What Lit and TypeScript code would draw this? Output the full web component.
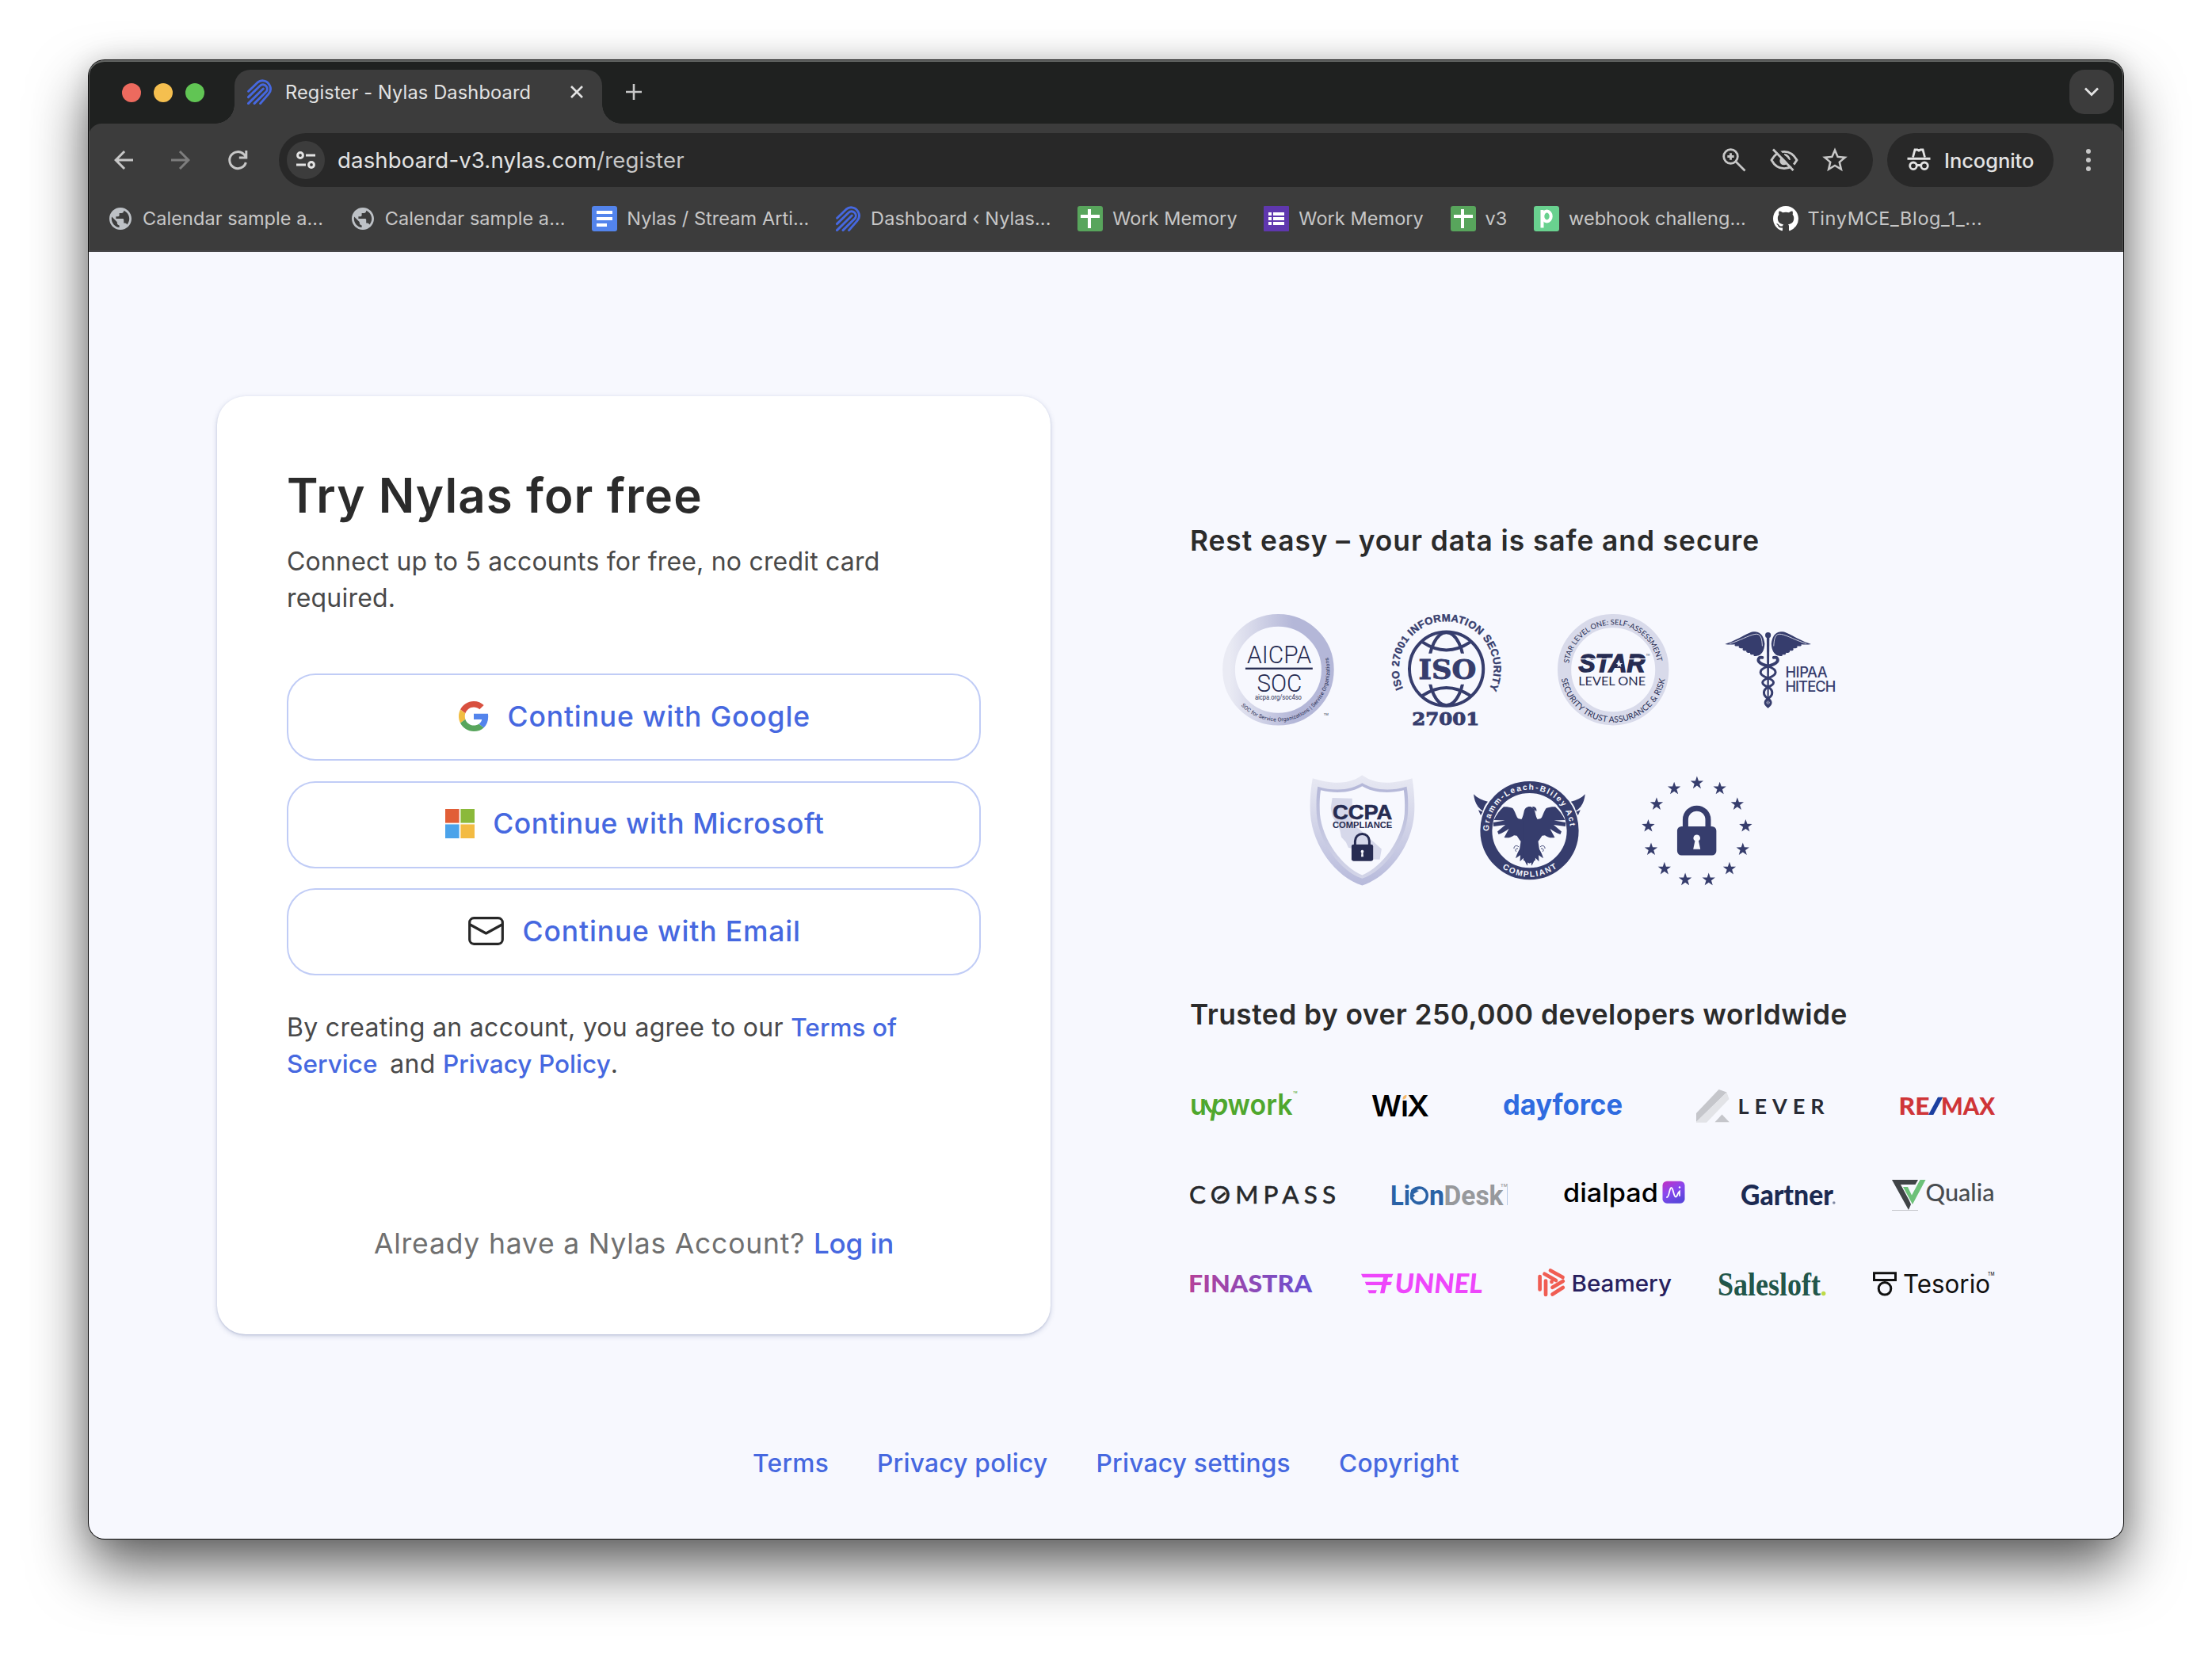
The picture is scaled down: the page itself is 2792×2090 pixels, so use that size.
import { LitElement, html, svg, css } from "lit";
import { customElement, property } from "lit/decorators.js";

const NAVY = "#363d6d";
const INK = "#272c52";

const nylasIcon = html`<svg class="i32" viewBox="0 0 32 32" fill="none" stroke="#4668e0" stroke-width="2.900" stroke-linecap="round">
  <path d="M1.600 15.200 13 4.200a9.800 9.800 0 0 1 15.200 3.200c2 3.800 1.600 8-1.200 11.200L16.600 30.600"/>
  <path d="M1.400 22.600 16.200 8.200a5.300 5.300 0 0 1 7.700.4 5.500 5.500 0 0 1-.2 7.500L9 30.600"/>
  <path d="M1.400 30.600 20.300 12"/></svg>`;

const globeIcon = html`<svg class="i32" viewBox="0 0 24 24"><path transform="translate(-.6 -.6) scale(1.05)" fill="#bdc1c6" d="M12 2C6.480 2 2 6.480 2 12s4.480 10 10 10 10-4.480 10-10S17.520 2 12 2zm-1 17.930c-3.950-.49-7-3.850-7-7.930 0-.62.080-1.210.21-1.790L9 15v1c0 1.100.9 2 2 2v1.930zm6.900-2.540c-.26-.81-1-1.390-1.900-1.390h-1v-3c0-.55-.45-1-1-1H8v-2h2c.55 0 1-.45 1-1V7h2c1.100 0 2-.9 2-2v-.41c2.930 1.190 5 4.060 5 7.410 0 2.080-.8 3.970-2.100 5.390z"/></svg>`;

const docIcon = html`<svg class="i32" viewBox="0 0 32 32"><rect width="32" height="32" rx="3" fill="#5384ec"/><path fill="#fff" d="M6 6h20v4H6zM6 14h20v4H6zM6 22h13v4H6z"/></svg>`;
const sheetIcon = html`<svg class="i32" viewBox="0 0 32 32"><rect width="32" height="32" rx="3" fill="#58a55c"/><path fill="#fff" d="M4 11h9V4h4v7h11v4H17v13h-4V15H4z"/></svg>`;
const formIcon = html`<svg class="i32" viewBox="0 0 32 32"><rect width="32" height="32" rx="1" fill="#5f37ae"/><path fill="#fff" d="M6 8h4v4H6zM12 8h14v4H12zM6 14h4v4H6zM12 14h14v4H12zM6 20h4v4H6zM12 20h14v4H12z"/></svg>`;
const pIcon = html`<svg class="i32" viewBox="0 0 32 32"><rect width="32" height="32" rx="3" fill="#69d18f"/><g fill="none" stroke="#fff" stroke-width="4"><path d="M10.500 5v22.500"/><ellipse cx="16.500" cy="13" rx="5.200" ry="6.500"/></g></svg>`;
const githubIcon = html`<svg class="i32" viewBox="0 0 16 16"><path fill="#fff" d="M8 0C3.580 0 0 3.580 0 8c0 3.540 2.290 6.530 5.470 7.590.4.070.55-.17.55-.38 0-.19-.010-.82-.010-1.490-2.010.37-2.530-.49-2.690-.94-.090-.23-.48-.94-.82-1.130-.28-.15-.68-.52-.010-.53.63-.010 1.080.58 1.230.82.72 1.210 1.870.87 2.330.66.070-.52.28-.87.51-1.070-1.780-.2-3.640-.89-3.640-3.950 0-.87.31-1.590.82-2.150-.080-.2-.36-1.020.080-2.120 0 0 .67-.21 2.200.82.64-.18 1.320-.27 2-.27s1.360.090 2 .27c1.530-1.040 2.200-.82 2.200-.82.44 1.100.16 1.920.080 2.120.51.56.82 1.270.82 2.150 0 3.070-1.870 3.750-3.650 3.950.29.25.54.73.54 1.480 0 1.070-.010 1.930-.010 2.200 0 .21.15.46.55.38A8.010 8.010 0 0 0 16 8c0-4.420-3.580-8-8-8z"/></svg>`;

const bookmarks: { icon: unknown; label: string; cls?: string }[] = [
  { icon: globeIcon, label: "Calendar sample a..." },
  { icon: globeIcon, label: "Calendar sample a..." },
  { icon: docIcon, label: "Nylas / Stream Arti..." },
  { icon: nylasIcon, label: "Dashboard ‹ Nylas..." },
  { icon: sheetIcon, label: "Work Memory" },
  { icon: formIcon, label: "Work Memory" },
  { icon: sheetIcon, label: "v3" },
  { icon: pIcon, label: "webhook challeng..." },
  { icon: githubIcon, label: "TinyMCE_Blog_1_...", cls: "wide" },
];

@customElement("browser-chrome")
export class BrowserChrome extends LitElement {
  static styles = css`
    :host { display: block; position: relative; height: 242px; background: #1f2120; border-radius: 20px 20px 0 0; overflow: hidden;
      font-family: Inter, "Liberation Sans", sans-serif; color: #e3e3e3; }
    :host::after { content: ""; position: absolute; inset: 0; border-radius: 20px 20px 0 0; pointer-events: none;
      box-shadow: inset 0 2px 0 #656866, inset 1px 0 0 #555, inset -1px 0 0 #555; }
    svg { display: block; flex: none; }
    .i32 { width: 32px; height: 32px; }
    .i36 { width: 36px; height: 36px; }
    .i38 { width: 38px; height: 38px; }
    .strip { display: flex; height: 80px; padding: 12px 12px 0 42px; box-sizing: border-box; }
    .lights { display: flex; gap: 16px; align-items: center; height: 58px; margin-right: 38px; }
    .light { width: 24px; height: 24px; border-radius: 50%; }
    .red { background: #ed6a5e; } .yellow { background: #f5bf4f; } .green { background: #61c554; }
    .tab { position: relative; display: flex; align-items: center; width: 464px; height: 68px; padding: 0 22px 12px 16px; box-sizing: border-box;
      background: #3c3c3c; border-radius: 20px 20px 0 0; font-size: 23.600px; letter-spacing: .14px; }
    .tab::before, .tab::after { content: ""; position: absolute; bottom: 0; width: 24px; height: 24px; }
    .tab::before { left: -24px; background: radial-gradient(circle at 0 0, transparent 23.500px, #3c3c3c 24px); }
    .tab::after { right: -24px; background: radial-gradient(circle at 100% 0, transparent 23.500px, #3c3c3c 24px); }
    .tabname { margin-left: 16px; flex: 1; white-space: nowrap; }
    .x { width: 20px; height: 20px; }
    .plus { width: 24px; height: 24px; margin: 16px 0 0 28px; }
    .drop { display: flex; align-items: center; justify-content: center; width: 56px; height: 56px; margin-left: auto; border-radius: 19px; background: #3c3c3c; }
    .chev { width: 20px; height: 14px; }
    .bars { background: #3c3c3c; border-radius: 16px 16px 0 0; height: 162px; box-sizing: border-box; border-bottom: 2px solid #474749; }
    .tools { display: flex; align-items: center; padding: 12px 0 0 26px; height: 68px; }
    .nav { display: flex; gap: 36px; margin-right: 34px; }
    .omni { display: flex; align-items: center; width: 2012px; height: 68px; box-sizing: border-box; padding: 0 29px 0 10px; border-radius: 34px; background: #282828; font-size: 27.600px; letter-spacing: .12px; }
    .site { display: flex; align-items: center; justify-content: center; width: 48px; height: 48px; border-radius: 50%; background: #3c3c3c; margin-right: 16px; }
    .path { color: #c7c7c7; flex: 1; }
    .acts { display: flex; align-items: center; gap: 27px; }
    .incog { display: flex; align-items: center; gap: 14px; width: 210px; height: 68px; margin-left: 18px; padding-left: 22px; box-sizing: border-box; border-radius: 34px; background: #282828; font-size: 25.500px; font-weight: 500; letter-spacing: -.05px; }
    .menu { margin-left: 26px; }
    .marks { display: flex; align-items: center; gap: 33.700px; height: 80px; padding-left: 24px; font-size: 23.500px; letter-spacing: .06px; color: #c7c7c7; }
    .mark { display: flex; align-items: center; gap: 12px; white-space: nowrap; }
    .mark span { padding-bottom: 2px; }
    .wide { letter-spacing: .6px; }
  `;

  render() {
    return html`
      <div class="strip">
        <div class="lights"><i class="light red"></i><i class="light yellow"></i><i class="light green"></i></div>
        <div class="tab">
          ${nylasIcon}<span class="tabname">Register - Nylas Dashboard</span>
          <svg class="x" viewBox="0 0 20 20" stroke="#e3e3e3" stroke-width="2.600"><path d="M3 3l14 14M17 3 3 17"/></svg>
        </div>
        <svg class="plus" viewBox="0 0 24 24" stroke="#c7c7c7" stroke-width="2.600"><path d="M12 2v20M2 12h20"/></svg>
        <div class="drop"><svg class="chev" viewBox="0 0 20 14" fill="none" stroke="#e3e3e3" stroke-width="2.800"><path d="m2 2.500 8 8 8-8"/></svg></div>
      </div>
      <div class="bars">
        <div class="tools">
          <div class="nav">
            <svg class="i36" viewBox="0 0 24 24" fill="#c7c7c7"><path d="M20 11H7.830l5.590-5.590L12 4l-8 8 8 8 1.410-1.410L7.830 13H20z"/></svg>
            <svg class="i36" viewBox="0 0 24 24" fill="#7d7d7d"><path d="m12 4-1.410 1.410L16.170 11H4v2h12.170l-5.580 5.590L12 20l8-8z"/></svg>
            <svg class="i36" viewBox="0 0 24 24" fill="none" stroke="#c7c7c7" stroke-width="2"><path d="M18.900 14a7 7 0 1 1-1.700-6.800l1.800 1.900M19.200 4v6h-6"/></svg>
          </div>
          <div class="omni">
            <div class="site"><svg class="i32" viewBox="0 0 32 32" fill="none" stroke="#e3e3e3" stroke-width="3"><circle cx="9" cy="10" r="3.400"/><path d="M16 10h12M4 22h12"/><circle cx="23" cy="22" r="3.400"/></svg></div>
            <span>dashboard-v3.nylas.com</span><span class="path">/register</span>
            <div class="acts">
              <svg class="i36" viewBox="0 0 36 36" fill="none" stroke="#c7c7c7" stroke-width="2.800"><circle cx="13.500" cy="13.500" r="8.800"/><path d="m20 20 11.500 11.500M13.500 9.300v8.400M9.300 13.500h8.400"/></svg>
              <svg class="i36" viewBox="0 0 36 36" fill="none" stroke="#c7c7c7" stroke-width="2.800"><path d="M2 18C5.500 11.500 11 7.300 18 7.300S30.500 11.500 34 18c-3.500 6.500-9 10.700-16 10.700S5.500 24.500 2 18z"/><path d="M18 11.500a6.500 6.500 0 0 1 6.500 6.500"/><circle cx="17.500" cy="19" r="5.200" fill="#c7c7c7" stroke="none"/><path d="M6.500 2.500 32.500 29" stroke="#282828" stroke-width="4"/><path d="m4 4.500 25.500 26.500"/></svg>
              <svg class="i38" viewBox="0 0 24 24" fill="#c7c7c7"><path d="M22 9.240l-7.190-.62L12 2 9.190 8.630 2 9.240l5.460 4.730L5.820 21 12 17.270 18.180 21l-1.630-7.030L22 9.240zM12 15.400l-3.760 2.270 1-4.280-3.320-2.880 4.380-.38L12 6.100l1.710 4.040 4.380.38-3.320 2.880 1 4.280L12 15.400z"/></svg>
            </div>
          </div>
          <div class="incog">
            <svg class="i36" viewBox="0 0 36 36" fill="none" stroke="#e3e3e3" stroke-width="2.800"><path d="M10.500 14.500 13 5h3l2 1.200L20 5h3l2.500 9.500"/><path d="M3.500 16.300h29" stroke-width="3"/><circle cx="11" cy="25.300" r="4.300"/><circle cx="25" cy="25.300" r="4.300"/><path d="M15 24.500h6"/></svg>
            Incognito
          </div>
          <svg class="i36 menu" viewBox="0 0 36 36" fill="#c7c7c7"><circle cx="18" cy="7" r="3"/><circle cx="18" cy="18" r="3"/><circle cx="18" cy="29" r="3"/></svg>
        </div>
        <div class="marks">
          ${bookmarks.map((b) => html`<div class="mark ${b.cls ?? ""}">${b.icon}<span>${b.label}</span></div>`)}
        </div>
      </div>`;
  }
}

const googleIcon = html`<svg class="g" viewBox="0 0 48 48"><path fill="#d8503f" d="M24 9.500c3.540 0 6.710 1.220 9.210 3.600l6.850-6.850C35.900 2.380 30.470 0 24 0 14.620 0 6.510 5.380 2.560 13.220l7.980 6.190C12.430 13.720 17.740 9.500 24 9.500z"/><path fill="#5384ec" d="M46.980 24.550c0-1.570-.15-3.090-.38-4.550H24v9.020h12.940c-.58 2.960-2.260 5.480-4.780 7.180l7.730 6c4.510-4.180 7.090-10.360 7.090-17.650z"/><path fill="#f1bd42" d="M10.530 28.590c-.48-1.450-.76-2.990-.76-4.590s.27-3.140.76-4.590l-7.980-6.190C.92 16.460 0 20.120 0 24c0 3.880.92 7.540 2.560 10.780l7.970-6.190z"/><path fill="#58a55c" d="M24 48c6.480 0 11.930-2.130 15.890-5.810l-7.730-6c-2.150 1.450-4.920 2.300-8.160 2.300-6.260 0-11.570-4.220-13.470-9.910l-7.980 6.190C6.510 42.620 14.620 48 24 48z"/></svg>`;
const msIcon = html`<svg class="ms" viewBox="0 0 37 37"><path fill="#e15e37" d="M0 0h17.600v17.600H0z"/><path fill="#8bb93a" d="M19.400 0H37v17.600H19.400z"/><path fill="#4ba3ea" d="M0 19.400h17.600V37H0z"/><path fill="#f3bb42" d="M19.400 19.400H37V37H19.400z"/></svg>`;
const mailIcon = html`<svg class="ml" viewBox="0 0 45 36" fill="none" stroke="#272727" stroke-width="3.200" stroke-linejoin="round"><rect x="1.700" y="1.700" width="41.600" height="32.600" rx="5.500"/><path d="m2.500 10 20 11 20-11"/></svg>`;

@customElement("signup-card")
export class SignupCard extends LitElement {
  static styles = css`
    :host { display: block; width: 1052px; height: 1184px; box-sizing: border-box; padding: 86px 88px 88px; background: #fff; border-radius: 36px;
      box-shadow: 0 2px 6px rgba(60, 80, 140, .26), 0 1px 2px rgba(60, 80, 140, .16); font-size: 32px; line-height: 46px; color: #494949; letter-spacing: .2px; }
    h1 { margin: 0; font-size: 60px; line-height: 78px; font-weight: 600; letter-spacing: 1.080px; color: #2b2b2b; }
    p { margin: 0; }
    a { color: #4668e0; font-weight: 500; font-size: 31.500px; letter-spacing: .05px; text-decoration: none; }
    svg { display: block; flex: none; }
    .g { width: 38px; height: 38px; } .ms { width: 37px; height: 37px; } .ml { width: 45px; height: 36px; }
    .desc { margin-top: 22px; }
    .btns { display: flex; flex-direction: column; gap: 25.600px; margin-top: 72px; }
    .btn { display: flex; align-items: center; justify-content: center; gap: 23.500px; height: 110px; width: 876px; box-sizing: border-box;
      border: 2px solid #c0ccf6; border-radius: 36px; background: #fff; padding: 0 0 2px 2px; color: #4668e0; font: 500 35.500px Inter, "Liberation Sans", sans-serif; letter-spacing: .85px; }
    .tight { letter-spacing: .56px; }
    .legal { margin-top: 42.500px; letter-spacing: .3px; }
    .and { margin-left: -3px; }
    .login { margin-top: 177px; text-align: center; font-size: 35.500px; line-height: 52px; color: #707070; letter-spacing: .79px; }
    .login a { font-size: 35px; letter-spacing: -.1px; }
  `;

  render() {
    return html`
      <h1>Try Nylas for free</h1>
      <p class="desc">Connect up to 5 accounts for free, no credit card<br>required.</p>
      <div class="btns">
        <button class="btn">${googleIcon}<span>Continue with Google</span></button>
        <button class="btn tight">${msIcon}<span>Continue with Microsoft</span></button>
        <button class="btn">${mailIcon}<span>Continue with Email</span></button>
      </div>
      <p class="legal">By creating an account, you agree to our <a>Terms of<br>Service</a>&nbsp; <span class="and">and</span> <a>Privacy Policy</a>.</p>
      <p class="login">Already have a Nylas Account? <a>Log in</a></p>`;
  }
}

const starPath = (cx: number, cy: number, r: number) =>
  Array.from({ length: 10 }, (_, i) => {
    const q = i % 2 ? r * 0.4 : r;
    const a = (-90 + i * 36) * (Math.PI / 180);
    return `${i ? "L" : "M"}${(cx + q * Math.cos(a)).toFixed(2)} ${(cy + q * Math.sin(a)).toFixed(2)}`;
  }).join("") + "Z";

const euStars = Array.from({ length: 13 }, (_, i) => {
  const a = (-90 + (i * 360) / 13) * (Math.PI / 180);
  return starPath(71 + 62 * Math.cos(a), 72.2 + 62 * Math.sin(a), 8.6);
}).join("");

const snake = (dir: number) => {
  const nodes = [54, 66, 81, 92, 107, 117];
  const amp = [15, 11, 8, 6, 4];
  let d = `M54.700 ${nodes[1]}`;
  for (let i = 1; i < 5; i++) {
    const s = (i % 2 ? 1 : -1) * dir * amp[i] * 1.15;
    const h = (nodes[i + 1] - nodes[i]) * 0.3;
    d += `C${54.7 + s} ${nodes[i] + h} ${54.7 + s} ${nodes[i + 1] - h} 54.700 ${nodes[i + 1]}`;
  }
  return d;
};

const soc = html`<svg viewBox="0 0 141 141">
  <defs><linearGradient id="sg"><stop offset="0" stop-color="#eaebf4"/><stop offset=".65" stop-color="#b4b7d8"/><stop offset="1" stop-color="#b4b7d8"/></linearGradient>
  <path id="sp" d="M23.700 115.700A65 65 0 0 0 133 52.600"/></defs>
  <circle cx="70.500" cy="70.300" r="62.500" fill="none" stroke="url(#sg)" stroke-width="15.800"/>
  <g fill=${INK} font-family="Roboto"><text x="31" y="62.300" font-size="31.500" font-weight="300" textLength="81.500" lengthAdjust="spacingAndGlyphs">AICPA</text>
  <rect x="29" y="67.700" width="85" height="2.300"/>
  <text x="43.500" y="97.700" font-size="31.500" font-weight="300" textLength="57" lengthAdjust="spacingAndGlyphs">SOC</text>
  <text x="41" y="108.300" font-size="8.800" textLength="59" lengthAdjust="spacingAndGlyphs">aicpa.org/soc4so</text>
  <text font-size="6.800"><textPath href="#sp" textLength="170">SOC for Service Organizations | Service Organizations</textPath></text>
  <text x="128" y="128.500" font-size="4">TM</text></g></svg>`;

const iso = html`<svg viewBox="0 0 141 141">
  <defs><path id="ip" d="M15.900 93.700A60 60 0 1 1 124.600 95.600"/><clipPath id="ic"><path d="M0 0h141v49.700H0zM0 89h141v52H0z"/></clipPath></defs>
  <g fill="none" stroke=${NAVY} stroke-width="4"><circle cx="70.700" cy="69.300" r="46.700"/>
  <path d="M40.500 35.500q30.200 20 60.400 0M40.500 103.100q30.200-20 60.400 0"/><ellipse cx="70.700" cy="69.300" rx="22.500" ry="46" clip-path="url(#ic)"/></g>
  <g fill=${NAVY} stroke=${NAVY} font-weight="700"><text font-family="Liberation Sans" font-size="13.200" stroke-width=".4"><textPath href="#ip" textLength="240">ISO 27001 INFORMATION SECURITY</textPath></text>
  <g font-family="DejaVu Serif" stroke-width=".9"><text x="35.500" y="81.700" font-size="34" textLength="73" lengthAdjust="spacingAndGlyphs">ISO</text>
  <text x="27.300" y="140" font-size="22.500" textLength="85" lengthAdjust="spacingAndGlyphs">27001</text></g></g></svg>`;

const star = html`<svg viewBox="0 0 141 141">
  <defs><path id="t1" d="M14.300 62.400A56.500 56.500 0 0 1 126.300 62.400"/><path id="t2" d="M4.800 81.800A66.500 66.500 0 0 0 135.800 81.800"/></defs>
  <circle cx="70.300" cy="70.300" r="61.700" fill="none" stroke="#d8daea" stroke-width="17.200"/>
  <g fill=${INK} font-family="Lato"><text font-size="9.300"><textPath href="#t1" textLength="160">STAR LEVEL ONE: SELF-ASSESSMENT</textPath></text>
  <text font-size="10.400"><textPath href="#t2" textLength="185">SECURITY TRUST ASSURANCE &amp; RISK</textPath></text>
  <text x="26.500" y="72.700" font-family="Liberation Sans" font-size="31.500" font-weight="700" font-style="italic" stroke=${INK} stroke-width="1.400" textLength="84" lengthAdjust="spacingAndGlyphs">STAR</text>
  <text x="26.300" y="89.800" font-size="16" textLength="85" lengthAdjust="spacingAndGlyphs">LEVEL ONE</text>
  <text x="112" y="53" font-size="3">TM</text></g>
  <path d="M26 56.800h44M88 56.800h25" stroke="#f7f8fe" stroke-width="1.300"/><path d=${starPath(78, 63.5, 4.4)} fill="#f7f8fe"/></svg>`;

const wing = "M50.500 37.500c-1-8-4-14.500-12-15.200-9-.5-16 8-38.200 15.700 5 1 9 .6 12.500.3-1.500 2.500 2 2.600 5 2-1 3 2 3.400 5 2.700-1 3 1.500 3.800 4.500 3.300-.8 2.600 2 3.200 4.800 2.500-.6 2.500 1.800 3 4.400 2.200-.6 2.400 1.500 2.600 6.500 1.300 4-2 7-6 7.500-14.800z";
const hipaa = html`<svg viewBox="0 0 141 141"><g fill=${NAVY}>
  <path d=${wing}/><path d=${wing} transform="translate(109.400 0) scale(-1 1)"/>
  <g fill="none" stroke="#f7f8fe" stroke-width=".8"><path d="M6 37.500C18 34 30 27 38 25.500s9 6 9.500 15"/><path d="M103.400 37.500C91.400 34 79.400 27 71.400 25.500s-9 6-9.500 15"/></g>
  <circle cx="54.700" cy="26.700" r="3.600"/><path d="M53 30h3.400l-.8 86h-1.800z"/>
  <g fill="none" stroke=${NAVY} stroke-width="3.800" stroke-linecap="round"><path d="M47.500 55c-5-1.500-7 4-2.500 7 3 2 7 3 9.700 4M61.900 55c5-1.500 7 4 2.500 7-3 2-7 3-9.700 4"/><path d=${snake(1)} stroke-width="3"/><path d=${snake(-1)} stroke-width="3"/></g>
  <g font-family="Inter" font-weight="500" font-size="18.300"><text x="76.500" y="79.700" textLength="53.500">HIPAA</text><text x="76.500" y="98" textLength="64">HITECH</text></g></g></svg>`;

const ccpa = html`<svg viewBox="0 0 141 141">
  <defs><linearGradient id="cg" x1="0" y1="0" x2="0" y2="1"><stop offset="0" stop-color="#e8e9f3"/><stop offset="1" stop-color="#b7badb"/></linearGradient>
  <linearGradient id="ch" x1="0" y1="0" x2="0" y2="1"><stop offset="0" stop-color="#b4b7d8"/><stop offset="1" stop-color="#d3d5e8"/></linearGradient></defs>
  <path fill="url(#cg)" d="M70.500.3C60 8 42 15 7.800 4.300 5 20 4 36 5 50c3 40 32 79 65.500 89.700C104 129 133 90 136.200 50c1-14 0-30-2.500-45.700C99 15 81 8 70.500.3z"/>
  <path fill="url(#ch)" d="M70.500 10.300C58 18 38 22 14.300 14.700c-2 12-2 22-1.500 34C15 84 42 121 70.500 131c28.500-10 55.500-47 57.700-82.300.5-12 .5-22-1.500-34C103 22 83 18 70.500 10.300z"/>
  <path fill="#f7f8fe" d="M70.500 14.300C60 21 40 25 18 19.300c-1.500 10-1.500 20-1 30C20 82 45 116 70.500 126.700 96 116 121 82 124 49.300c.5-10 .5-20-1-30C101 25 81 21 70.500 14.300z"/>
  <path fill="#d6d8ea" d="M32.700 29l25.200.7-.4 30.600L95 93.700l-2.300 13.300-18-.7L72 97l-19-5-3-7-5.900-6.300-1.900-9.400L32.700 52l-2-10z"/>
  <g fill=${INK} font-family="Liberation Sans" font-weight="700"><text x="33" y="56" font-size="26.500" stroke=${INK} stroke-width=".6" textLength="75.500" lengthAdjust="spacingAndGlyphs">CCPA</text>
  <text x="33" y="67.500" font-size="10.500" textLength="75.500" lengthAdjust="spacingAndGlyphs">COMPLIANCE</text>
  <rect x="57" y="88" width="27.300" height="21" rx="2.500"/></g>
  <path d="M61.500 89v-5.500a9 9 0 0 1 18 0V89" fill="none" stroke=${INK} stroke-width="3"/>
  <path fill="#f7f8fe" d="M70.600 95a1.900 1.900 0 0 1 1 3.500l.5 5h-3l.5-5a1.900 1.900 0 0 1 1-3.500z"/></svg>`;

const eagleHalf = "M72.300 40c-5 0-7.300 2-8.300 5-1 4-1.500 8-3.500 11-3 0-4.500-1-5.500-2.300-2-5-3.500-9-5.600-11.700-4-1.500-8-2-11.400-1.700-5 4.500-9.500 10-12.400 16.700l14 .5-15 2.500.5 5 15-2-10 8.500 1.500 3.500c3-1 9-4 13-7l-6 11c5 1 9 0 12.500-2.700l3.500.5c2 3 3 5 5 7-.5 4-1 7-1.500 10-2 3.500-4 7.500-5 11.500l6-4-.5 8 5-5c1 4 2 7 4.500 10.500z";
const glb = html`<svg viewBox="0 0 141 141">
  <defs><path id="g1" d="M19.100 71A51.500 51.500 0 0 1 122 67"/><path id="g2" d="M36.200 117.600A58.500 58.500 0 0 0 106.600 116.400"/></defs>
  <g fill=${NAVY}><path d="M0 24.300c5 5 11 8 18 9.400-3 3-5 7-6.200 11.800C4 41 1 33 0 24.300zM141 24.300c-5 5-11 8-18 9.400 3 3 5 7 6.200 11.800C137 41 140 33 141 24.300zM6 44.300l5.500 2.200-2.500 4.500zM135 44.300l-5.500 2.200 2.500 4.500z"/></g>
  <circle cx="70.600" cy="70.300" r="54.700" fill="none" stroke=${NAVY} stroke-width="15"/>
  <g fill=${NAVY}><path d=${eagleHalf}/><path d=${eagleHalf} transform="translate(141.200 0) scale(-1 1)"/><path d="M74 40c4 0 6 2 5.500 6l-3-2zM63 58h15v50l-7.400 4-7.600-4z"/></g>
  <g fill="none" stroke=${NAVY} stroke-width="1"><path d="M57 91c-3-3-6-1-6 2M56 93c-3 0-4 2-2 4M84.200 91c3-3 6-1 6 2M85.200 93c3 0 4 2 2 4"/></g>
  <g fill="#f7f8fe" font-family="Liberation Sans" font-weight="700" font-size="10.200"><text><textPath href="#g1" textLength="157">Gramm-Leach-Bliley Act</textPath></text>
  <text><textPath href="#g2" textLength="74">COMPLIANT</textPath></text></g></svg>`;

const eu = html`<svg viewBox="0 0 141 141"><g fill=${NAVY}><path d=${euStars}/><rect x="46" y="65" width="49.500" height="36.700" rx="5.500"/></g>
  <path d="M56.500 67V56.500a14.300 14.300 0 0 1 28.600 0V67" fill="none" stroke=${NAVY} stroke-width="7"/>
  <path fill="#f7f8fe" d="M70.800 75.500a4.300 4.300 0 0 1 2.300 7.900l2.200 10.400h-9l2.200-10.400a4.300 4.300 0 0 1 2.300-7.900z"/></svg>`;

const fit = (x: number, y: number, size: number, len: number, t: string, fill: string, cls: string) =>
  svg`<text class=${cls} x=${x} y=${y} font-size=${size} textLength=${len} lengthAdjust="spacingAndGlyphs" fill=${fill}>${t}</text>`;

interface Logo { w: number; art: unknown; }

const rows: Logo[][] = [
  [
    { w: 135, art: svg`${fit(0, 32.5, 36.5, 21, "u", "#4fa72e", "in6")}<path d="M19 14.500c2 6 4.500 12 8.500 15" fill="none" stroke="#4fa72e" stroke-width="4"/><g transform="translate(26.500 32.500) skewX(-10) translate(-26.500 -32.500)">${fit(24.5, 32.5, 36.5, 22, "p", "#4fa72e", "in6")}</g>${fit(47.5, 32.5, 36.5, 82, "work", "#4fa72e", "in6")}<text x="130" y="6" font-size="3.500" class="in5" fill="#4fa72e">TM</text>` },
    { w: 71, art: svg`${fit(-1, 35, 37, 38, "W", "#000", "in6")}${fit(36.5, 35, 37, 9, "ı", "#000", "in7")}${fit(44, 35, 37, 28, "X", "#000", "in6")}<path d="M38.500 13.500c0-4 2-5.500 5-5.500 0 4-2 5.500-5 5.500z" fill="#f5b96b"/>` },
    { w: 149, art: svg`${fit(-1, 32.5, 35.5, 151, "dayforce", "#2f6be0", "in8")}` },
    { w: 162, art: svg`<path d="M0 31 28.500 1l10 3.500L0 42z" fill="#c5c6cb"/><path d="M0 42 38.500 4.500 41.500 13 13 42.700H0z" fill="#e2e3e7"/><path d="M23.500 42.300 32.500 32.500l9.300 9.800z" fill="#c5c6cb"/><text class="la7" x="52.500" y="32" font-size="27" textLength="109" fill="#282b35">LEVER</text>` },
    { w: 120, art: svg`${fit(-1.5, 32.7, 30.5, 39, "RE", "#cf3538", "la9")}<path d="M36 33 48 10.800h6.300L42.300 33z" fill="#1b3fa0"/>${fit(52, 32.7, 30.5, 68, "MAX", "#cf3538", "la9")}` },
  ],
  [
    { w: 183, art: svg`<text class="la4" x="-1" y="33.300" font-size="31.500" textLength="185" fill="#26282b" stroke="#26282b" stroke-width=".6">COMPASS</text><path d="m35 27.500 9.500-8" stroke="#26282b" stroke-width="3"/>` },
    { w: 147, art: svg`${fit(-1, 34.6, 35, 25, "Li", "#2a62a6", "ro7")}<circle cx="35.400" cy="22.800" r="9.900" fill="none" stroke="#2a62a6" stroke-width="3.400"/><path d="M25 16c3-4 8-5 13-2l-6 2 3 1-7 4 2 2-6 5zM30 31c4 0 8-2 12 0l-3 3z" fill="#2a62a6"/>${fit(48, 34.6, 35, 19, "n", "#2a62a6", "ro7")}${fit(66.5, 34.6, 35, 75, "Desk", "#97999c", "ro7")}<text class="ro5" x="138" y="12" font-size="6" fill="#97999c">TM</text><path d="M146.500 9v26" stroke="#b7cbe6"/>` },
    { w: 152.5, art: svg`<defs><linearGradient id="dp" x1="0" y1="0" x2=".5" y2="1"><stop offset="0" stop-color="#c62fc0"/><stop offset=".5" stop-color="#8a47ee"/><stop offset="1" stop-color="#5b46dc"/></linearGradient></defs>${fit(-1, 30.7, 33, 120, "dialpad", "#000", "in5")}<rect x="124.500" y="4.700" width="28" height="28" rx="5.500" fill="url(#dp)"/><path d="M130 25c3 0 3-12 5.500-12s3 11.500 5.500 11.500 2-5 5-7v5.500" fill="none" stroke="#fff" stroke-width="1.800" stroke-linecap="round"/><circle cx="146" cy="12.500" r="1.200" fill="#fff"/>` },
    { w: 119, art: svg`${fit(-1, 34.5, 36.5, 117, "Gartner", "#1c2a52", "la9")}<circle cx="116.800" cy="32" r="1.800" fill="#8089a3"/>` },
    { w: 130, art: svg`<path d="M0 3h33l-3.500 6H11l10.500 19.500L24 34l-3 7z" fill="#404447"/><path d="M14 12h6l5 10.500L35.500 3h7L26 34z" fill="#6dc179"/>${fit(42.5, 30.3, 30, 87, "Qualia", "#484c50", "la5")}<path d="M0 41.500h33" stroke="#c5c6cb"/>` },
  ],
  [
    { w: 156, art: svg`<defs><linearGradient id="fn" gradientUnits="userSpaceOnUse" x1="0" x2="154" y1="0" y2="0"><stop offset="0" stop-color="#b4419a"/><stop offset="1" stop-color="#6851d2"/></linearGradient></defs>${fit(-2, 32.7, 30, 156, "FINASTRA", "url(#fn)", "la9")}` },
    { w: 163, art: svg`<path fill="#ee46fb" d="M0 9.700h40.500l-2 4.600H2zM4.800 19.700h34l-1.500 4.300H6.500zM8.300 30.300h11.500l-1.300 4H10zM29 10h6l-5.500 24.300h-5.500z"/><g transform="translate(43 0) skewX(-6)">${fit(2, 34.3, 34, 111, "UNNEL", "#ee46fb", "la9")}</g>` },
    { w: 168, art: svg`<g stroke="#f05d53" stroke-width="4.700" stroke-linecap="round" fill="none"><path d="M2.600 13v16.500M10 18.500v17.500M16 5.500 31.500 14M8.500 9.800 23 18M31.800 19 18.500 26.800M31.800 27 18.500 35.500M17.500 19.500v.5"/></g>${fit(42.5, 32, 29, 126.5, "Beamery", "#27205e", "in5")}` },
    { w: 135, art: svg`${fit(-1, 37, 42, 130, "Salesloft", "#22564a", "se")}<circle cx="132.700" cy="34.500" r="2.700" fill="#bedb48"/>` },
    { w: 152, art: svg`<g fill="none" stroke="#111" stroke-width="3"><path d="M1.500 8.800h27v8.700h-27z"/><circle cx="15" cy="28.300" r="7.800"/></g>${fit(38, 33.7, 32, 110, "Tesorio", "#111", "in4")}<text class="in4" x="145" y="12" font-size="5.500">TM</text>` },
  ],
];

@customElement("trust-panel")
export class TrustPanel extends LitElement {
  static styles = css`
    :host { display: block; width: 1016px; padding-top: 156.600px; box-sizing: border-box; }
    h2 { margin: 0; font-size: 35.300px; line-height: 52px; font-weight: 600; color: #2b2b2b; letter-spacing: .96px; white-space: nowrap; }
    .second { margin-top: 136.700px; letter-spacing: .48px; }
    svg { display: block; overflow: visible; }
    .badges { display: flex; flex-wrap: wrap; justify-content: center; gap: 62px 70.400px; width: 857px; margin-top: 66.400px; }
    .badges svg { width: 140.800px; height: 140.800px; }
    .logos { display: flex; flex-direction: column; gap: 68px; margin-top: 66.700px; }
    .row { display: flex; justify-content: space-between; height: 44px; }
    .row.tight { justify-content: flex-start; gap: 60px; }
    .in4 { font-family: Inter; font-weight: 400; } .in5 { font-family: Inter; font-weight: 500; }
    .in6 { font-family: Inter; font-weight: 600; } .in7 { font-family: Inter; font-weight: 700; } .in8 { font-family: Inter; font-weight: 750; }
    .la4 { font-family: Lato; font-weight: 400; } .la5 { font-family: Lato; font-weight: 500; } .la7 { font-family: Lato; font-weight: 700; } .la9 { font-family: Lato; font-weight: 900; }
    .ro5 { font-family: Roboto; font-weight: 500; } .ro7 { font-family: Roboto; font-weight: 700; }
    .se { font-family: "Liberation Serif"; font-weight: 700; }
  `;

  render() {
    return html`
      <h2>Rest easy – your data is safe and secure</h2>
      <div class="badges">${soc}${iso}${star}${hipaa}${ccpa}${glb}${eu}</div>
      <h2 class="second">Trusted by over 250,000 developers worldwide</h2>
      <div class="logos">
        ${rows.map((r, i) => html`<div class="row ${i === 2 ? "tight" : ""}">
          ${r.map((l) => html`<svg width=${l.w} height="44" viewBox="0 0 ${l.w} 44">${l.art}</svg>`)}
        </div>`)}
      </div>`;
  }
}

@customElement("app-root")
export class AppRoot extends LitElement {
  @property({ attribute: false }) links = ["Terms", "Privacy policy", "Privacy settings", "Copyright"];

  static styles = css`
    :host { display: block; width: 2792px; height: 2090px; box-sizing: border-box; padding: 76px 112px 0; background: #fff; overflow: hidden;
      font-family: Inter, "Liberation Sans", sans-serif; }
    .window { width: 2568px; height: 1866px; background: #f7f8fe; border-radius: 20px;
      box-shadow: 0 0 0 1px #0a0a0a, 0 36px 72px rgba(0, 0, 0, .62), 0 0 32px rgba(0, 0, 0, .14); }
    .main { display: flex; gap: 176px; padding: 182px 0 0 162px; }
    .foot { display: flex; justify-content: center; gap: 61px; margin-top: 139.700px; font-size: 31.700px; line-height: 46px; font-weight: 500; color: #4668e0; letter-spacing: .25px; }
  `;

  render() {
    return html`<div class="window">
      <browser-chrome></browser-chrome>
      <div class="main"><signup-card></signup-card><trust-panel></trust-panel></div>
      <div class="foot">${this.links.map((l) => html`<span>${l}</span>`)}</div>
    </div>`;
  }
}
